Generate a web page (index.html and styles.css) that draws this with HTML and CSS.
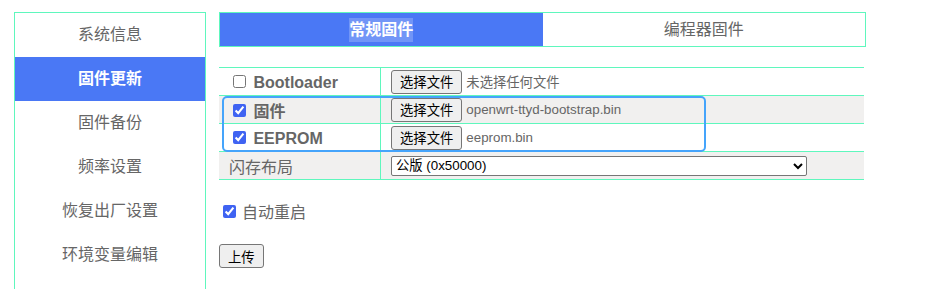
FILE: index.html
```html
<!DOCTYPE html>
<html lang="zh-CN">
<head>
    <meta charset="UTF-8">
    <meta name="viewport" content="width=device-width, initial-scale=1.0">
    <title>固件更新</title>
    <link rel="stylesheet" href="styles.css">
</head>
<body>

<div class="page">
    <nav class="sidebar">
        <a class="menu-item">系统信息</a>
        <a class="menu-item active">固件更新</a>
        <a class="menu-item">固件备份</a>
        <a class="menu-item">频率设置</a>
        <a class="menu-item">恢复出厂设置</a>
        <a class="menu-item">环境变量编辑</a>
    </nav>

    <main class="content">
        <div class="tabs">
            <div class="tab active"><span class="tab-label">常规固件</span></div>
            <div class="tab">编程器固件</div>
        </div>

        <div class="table-wrap">
            <table class="form-table">
                <tr>
                    <td class="label-cell"><label class="check-label"><input type="checkbox"> Bootloader</label></td>
                    <td><button class="file-btn">选择文件</button><span class="file-name">未选择任何文件</span></td>
                </tr>
                <tr>
                    <td class="label-cell"><label class="check-label"><input type="checkbox" checked> 固件</label></td>
                    <td><button class="file-btn">选择文件</button><span class="file-name">openwrt-ttyd-bootstrap.bin</span></td>
                </tr>
                <tr>
                    <td class="label-cell"><label class="check-label"><input type="checkbox" checked> EEPROM</label></td>
                    <td><button class="file-btn">选择文件</button><span class="file-name">eeprom.bin</span></td>
                </tr>
                <tr>
                    <td class="label-cell">闪存布局</td>
                    <td>
                        <select class="layout-select">
                            <option>公版 (0x50000)</option>
                        </select>
                    </td>
                </tr>
            </table>
            <!-- annotation box over the selected rows -->
            <div class="highlight"></div>
        </div>

        <label class="auto-reboot"><input type="checkbox" checked>自动重启</label>

        <button class="upload-btn">上传</button>
    </main>
</div>

</body>
</html>
```

FILE: styles.css
```css
body {
    margin: 0;
    font-family: "Liberation Sans", "Noto Sans CJK SC", sans-serif;
    color: #666;
    background: #fff;
    overflow: hidden;
}

input[type="checkbox"] {
    accent-color: #3f63f2;
}

.page {
    display: flex;
    gap: 13px;
    padding: 12px 0 0 14px;
}

.sidebar {
    width: 190px;
    height: 280px;
    border: 1px solid #5ff7bd;
    display: flex;
    flex-direction: column;
}

.menu-item {
    height: 44px;
    line-height: 44px;
    text-align: center;
    font-size: 16px;
    color: #666;
}

.menu-item.active {
    background-color: #4a78f5;
    color: #fff;
    font-weight: bold;
}

.content {
    width: 647px;
}

.tabs {
    display: flex;
    height: 33px;
    border: 1px solid #5ff7bd;
}

.tab {
    flex: 1;
    text-align: center;
    line-height: 33px;
    font-size: 16px;
    color: #666;
}

.tab.active {
    background-color: #4a78f5;
    color: #fff;
    font-weight: bold;
}

.tab-label {
    display: inline-block;
    line-height: 24px;
    background-color: rgba(255, 255, 255, 0.22);
}

.table-wrap {
    position: relative;
    margin-top: 20px;
}

.form-table {
    width: 645px;
    border-collapse: collapse;
}

.form-table td {
    height: 27px;
    padding: 0 10px;
    border-top: 1px solid #5ff7bd;
    border-bottom: 1px solid #5ff7bd;
    font-size: 16px;
}

.form-table tr:nth-child(even) {
    background-color: #f1f0ef;
}

.form-table td.label-cell {
    width: 141px;
    border-right: 1px solid #5ff7bd;
}

.check-label {
    font-weight: bold;
}

.file-btn {
    height: 24px;
    padding: 0 8px;
    font-family: "Liberation Sans", "Noto Sans CJK SC", sans-serif;
    font-size: 13.33px;
    color: #000;
    background-color: #efefef;
    border: 1px solid #767676;
    border-radius: 3px;
    vertical-align: middle;
}

.file-name {
    margin-left: 4px;
    font-size: 13.33px;
    color: #666;
    vertical-align: middle;
}

.layout-select {
    width: 416px;
    height: 20px;
    font-family: "Liberation Sans", "Noto Sans CJK SC", sans-serif;
    font-size: 13.33px;
    color: #000;
    background-color: #fff;
    border: 1px solid #767676;
    border-radius: 2px;
    vertical-align: middle;
}

.highlight {
    position: absolute;
    left: 3px;
    top: 29px;
    width: 480px;
    height: 52px;
    border: 2px solid #45a4fb;
    border-radius: 5px;
    pointer-events: none;
}

.auto-reboot {
    display: flex;
    align-items: center;
    height: 20px;
    margin-top: 21px;
    font-size: 16px;
}

.auto-reboot input {
    margin: 0 6px 0 4px;
}

.upload-btn {
    display: block;
    margin-top: 23px;
    height: 24px;
    padding: 0 8px;
    font-family: "Liberation Sans", "Noto Sans CJK SC", sans-serif;
    font-size: 13.33px;
    color: #000;
    background-color: #efefef;
    border: 1px solid #767676;
    border-radius: 3px;
}
```
